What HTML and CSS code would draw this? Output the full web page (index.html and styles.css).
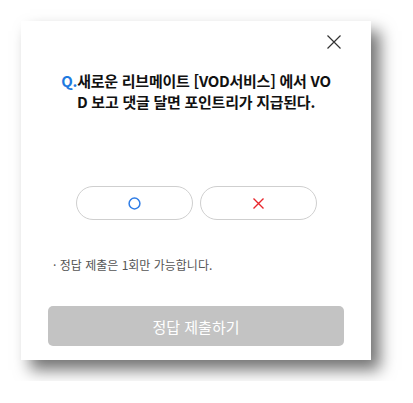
FILE: index.html
```html
<!DOCTYPE html>
<html lang="ko">
<head>
    <meta charset="UTF-8">
    <meta name="viewport" content="width=device-width, initial-scale=1.0">
    <title>퀴즈</title>
    <link rel="stylesheet" href="styles.css">
</head>
<body>

    <div class="quiz-modal">
        <button class="close-btn" aria-label="닫기">
            <svg width="14" height="14" viewBox="0 0 14 14">
                <path d="M0.5 0.5 L13.5 13.5 M13.5 0.5 L0.5 13.5" stroke="#333" stroke-width="1.2" fill="none"/>
            </svg>
        </button>

        <p class="question"><span class="q-mark">Q.</span>새로운 리브메이트 [VOD서비스] 에서 VOD 보고 댓글 달면 포인트리가 지급된다.</p>

        <div class="answers">
            <button class="answer">
                <svg width="13" height="13" viewBox="0 0 13 13">
                    <circle cx="6.5" cy="6.5" r="5.4" stroke="#2f7de6" stroke-width="1.5" fill="none"/>
                </svg>
            </button>
            <button class="answer">
                <svg width="11" height="11" viewBox="0 0 11 11">
                    <path d="M0.5 0.5 L10.5 10.5 M10.5 0.5 L0.5 10.5" stroke="#e8262c" stroke-width="1.4" fill="none"/>
                </svg>
            </button>
        </div>

        <p class="note">· 정답 제출은 1회만 가능합니다.</p>

        <button class="submit" disabled>정답 제출하기</button>
    </div>

</body>
</html>
```

FILE: styles.css
```css
* {
    margin: 0;
    padding: 0;
    box-sizing: border-box;
}

body {
    font-family: 'Noto Sans CJK KR', 'Noto Sans', sans-serif;
    background: #fff;
    padding: 21px;
}

.quiz-modal {
    position: relative;
    width: 350px;
    height: 339px;
    background: #fff;
    padding: 49px 27px 14px;
    box-shadow: 9px 10px 15px rgba(0, 0, 0, 0.55);
    display: flex;
    flex-direction: column;
}

.close-btn {
    position: absolute;
    top: 14px;
    right: 30px;
    width: 14px;
    height: 14px;
    border: none;
    background: none;
    display: flex;
}

.question {
    width: 272px;
    margin: 0 auto;
    font-size: 15px;
    line-height: 21px;
    font-weight: 700;
    color: #111;
    text-align: center;
    word-break: break-all;
    letter-spacing: -0.25px;
}

.q-mark {
    color: #1f7ae0;
}

.answers {
    display: flex;
    justify-content: center;
    gap: 7px;
    margin-top: 74px;
}

.answer {
    width: 117px;
    height: 34px;
    border: 1px solid #cfcfcf;
    border-radius: 17px;
    background: #fff;
    display: flex;
    align-items: center;
    justify-content: center;
}

.note {
    margin-top: 36px;
    padding-left: 5px;
    font-size: 12px;
    line-height: 18px;
    color: #555;
}

.submit {
    margin-top: auto;
    height: 40px;
    border: none;
    border-radius: 5px;
    background: #c3c3c3;
    color: #fff;
    font-family: inherit;
    font-size: 15px;
}
```
